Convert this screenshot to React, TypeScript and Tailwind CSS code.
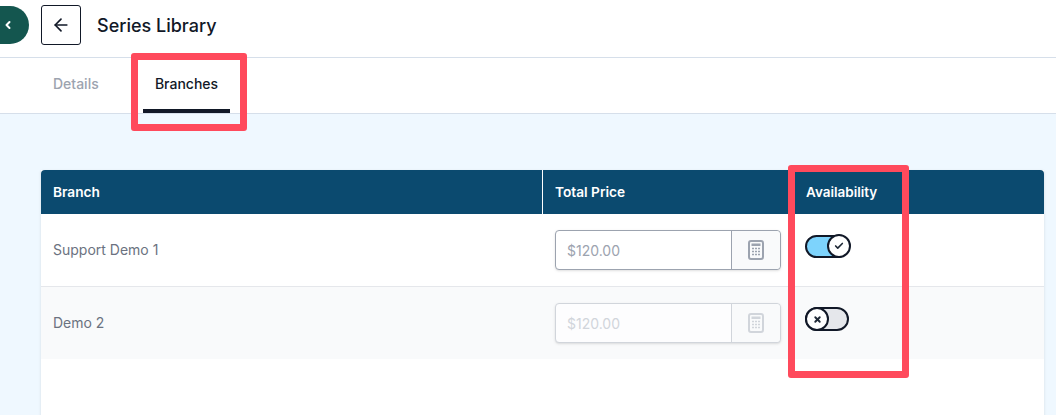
import { ArrowLeft, Check, ChevronLeft, X } from "lucide-react";

function CalcIcon({ muted }: { muted?: boolean }) {
  return (
    <svg
      width="16"
      height="20"
      viewBox="0 0 16 20"
      fill="none"
      className={muted ? "text-[#d1d5db]" : "text-[#9ca3af]"}
    >
      <rect x="1" y="1" width="14" height="18" rx="2" stroke="currentColor" strokeWidth="2" />
      <rect x="3.5" y="3.5" width="9" height="2.5" fill="currentColor" />
      <path
        d="M4 8.5h2M7 8.5h2M10 8.5h2M4 11.5h2M7 11.5h2M10 11.5h2M4 14.5h2M7 14.5h2M10 14.5h2"
        stroke="currentColor"
        strokeWidth="1.5"
      />
    </svg>
  );
}

function PriceInput({ disabled }: { disabled?: boolean }) {
  return (
    <div
      className={`flex h-10 w-[226px] rounded border shadow-sm ${
        disabled ? "border-[#d1d5db] bg-[#fdfdfe]" : "border-[#9ca3af] bg-white"
      }`}
    >
      <div
        className={`flex flex-1 items-center pl-[11px] pt-[2px] text-sm ${
          disabled ? "text-[#d1d5db]" : "text-[#9ca3af]"
        }`}
      >
        $120.00
      </div>
      <div
        className={`flex w-[49px] items-center justify-center rounded-r border-l ${
          disabled ? "border-[#d1d5db] bg-[#f9fafb]" : "border-[#9ca3af] bg-[#f9fafb]"
        }`}
      >
        <CalcIcon muted={disabled} />
      </div>
    </div>
  );
}

function Toggle({ on }: { on?: boolean }) {
  if (on) {
    return (
      <div className="relative h-[24px] w-[46px]">
        <div className="absolute left-0 top-[1px] h-[23px] w-[44px] rounded-full border-2 border-[#111827] bg-[#7dd3fc]" />
        <div className="absolute right-0 top-0 flex h-[24px] w-[24px] items-center justify-center rounded-full border-2 border-[#111827] bg-white">
          <Check size={10} strokeWidth={4} className="text-[#1f2937]" />
        </div>
      </div>
    );
  }
  return (
    <div className="relative h-[24px] w-[44px]">
      <div className="absolute inset-0 rounded-full border-2 border-[#111827] bg-[#e5e7eb]" />
      <div className="absolute left-0 top-0 flex h-[24px] w-[24px] items-center justify-center rounded-full border-2 border-[#111827] bg-white">
        <X size={9} strokeWidth={5} className="text-[#1f2937]" />
      </div>
    </div>
  );
}

export default function App() {
  return (
    <div className="relative h-[415px] w-[1056px] overflow-hidden bg-white font-['Inter',sans-serif]">
      <header className="flex h-[58px] items-center border-b border-[#d6dfea] pb-[7px]">
        <div className="flex h-[38px] w-[29px] items-center justify-end rounded-r-full bg-[#14564f] pr-[15px] text-white">
          <ChevronLeft size={12} strokeWidth={4} />
        </div>
        <button className="ml-3 flex h-10 w-10 items-center justify-center rounded-[3px] border border-[#111827]">
          <ArrowLeft size={20} strokeWidth={2} className="text-[#111827]" />
        </button>
        <h1 className="ml-4 text-[18px] font-medium text-[#111827]">Series Library</h1>
      </header>

      <nav className="flex h-[56px] border-b border-[#d6dfea] pl-[41px] text-[14px] font-medium">
        <div className="flex w-[102px] items-center justify-start pb-1 pl-3 text-[#9ca3af]">Details</div>
        <div className="flex w-[87px] items-center justify-center border-b-4 border-[#111827] text-[#111827]">
          Branches
        </div>
      </nav>

      <main className="h-full bg-[#eff8ff] pl-[41px] pr-3 pt-14">
        <div className="h-full bg-white shadow-sm">
          <div className="grid h-11 grid-cols-[502px_250px_1fr] items-center rounded-t bg-[#0b4a6f] text-[13.7px] font-semibold text-white">
            <div className="flex h-full items-center border-r border-white pl-3">Branch</div>
            <div className="pl-3">Total Price</div>
            <div className="pl-[13px] text-[13.5px]">Availability</div>
          </div>
          <div className="grid h-[73px] grid-cols-[502px_250px_1fr] items-center border-b border-[#e5e7eb] text-[14px] text-[#6b7280]">
            <div className="pb-[2px] pl-3">Support Demo 1</div>
            <div className="pl-3">
              <PriceInput />
            </div>
            <div className="mb-2 pl-3">
              <Toggle on />
            </div>
          </div>
          <div className="grid h-[72px] grid-cols-[502px_250px_1fr] items-center bg-[#f9fafb] text-[14px] text-[#6b7280]">
            <div className="pb-[2px] pl-3">Demo 2</div>
            <div className="pl-3">
              <PriceInput disabled />
            </div>
            <div className="mb-2 pl-3">
              <Toggle />
            </div>
          </div>
        </div>
      </main>

      {/* red annotation boxes from the screenshot */}
      <div className="absolute left-[131px] top-[53px] h-[78px] w-[116px] rounded-[3px] border-[7px] border-[#ff4a5c]" />
      <div className="absolute left-[788px] top-[165px] h-[213px] w-[121px] rounded-[3px] border-[7px] border-[#ff4a5c]" />
    </div>
  );
}
